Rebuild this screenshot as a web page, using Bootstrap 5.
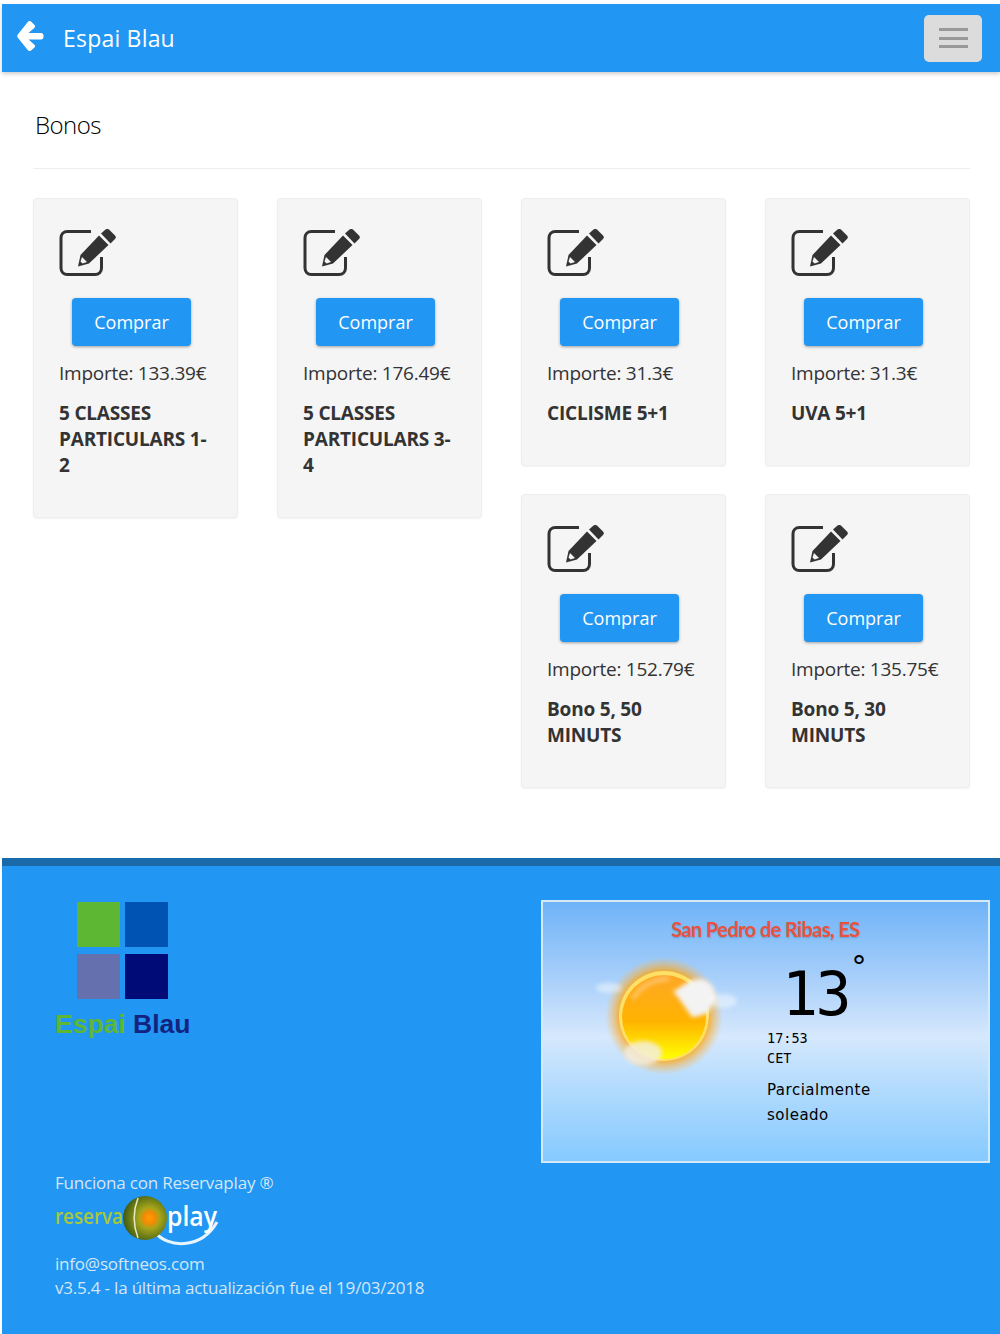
<!DOCTYPE html>
<html lang="es">
<head>
  <meta charset="UTF-8" />
  <meta name="viewport" content="width=device-width, initial-scale=1.0"/>
  <title>Espai Blau - Bonos</title>
  <link href="https://cdn.jsdelivr.net/npm/bootstrap@5.3.3/dist/css/bootstrap.min.css" rel="stylesheet">
  <style>
    html, body { height: 100%; }
    body {
      margin: 0;
      padding: 4px 0 0 2px;
      background: #fff;
      font-family: "Open Sans", sans-serif;
      overflow: hidden;
    }
    .app-bar {
      height: 68px;
      padding: 0 18px 0 15px;
      background: #2196f3;
      box-shadow: 0 2px 4px rgba(0, 0, 0, .2);
    }
    .back-arrow { margin-bottom: 4px; }
    .app-title { margin-left: 19px; font-family: "Open Sans", sans-serif; font-size: 23px; color: #fff; letter-spacing: .2px; }
    .menu-toggle {
      width: 58px;
      height: 47px;
      padding: 0;
      gap: 5.5px;
      background: #dcdcdc;
      border: 0;
      border-radius: 5px;
    }
    .menu-toggle span { width: 29px; height: 3px; background: #999; }
    .page-body { padding: 0 30px 0 31px; height: 786px; }
    .page-title {
      margin: 0;
      padding: 39px 0 29px 2px;
      font-family: "Open Sans", sans-serif;
      font-size: 24px;
      font-weight: 300;
      line-height: 28px;
      letter-spacing: -.5px;
      color: #000;
      border-bottom: 1px solid #eee;
    }
    .bono-grid { margin-top: 29px; display: grid; grid-template-columns: 1fr 1fr; column-gap: 39px; align-items: start; }
    .bono-group { display: grid; grid-template-columns: 205px 205px; column-gap: 39px; row-gap: 28px; align-items: start; }
    .bono-card {
      padding: 30px 25px 39px;
      background: #f5f5f5;
      border: 1px solid #eee;
      border-radius: 4px;
      box-shadow: 0 1px 2px rgba(0, 0, 0, .05);
      font-size: 19px;
      line-height: 26px;
      color: #333;
    }
    .bono-icon { display: block; width: 58px; height: 48px; }
    .btn-buy {
      display: block;
      width: 119px;
      height: 48px;
      margin: 21px 0 14px 13px;
      padding: 0;
      background: #2196f3;
      border: 0;
      border-radius: 4px;
      box-shadow: 0 1px 3px rgba(0, 0, 0, .35);
      color: #fff;
      font-size: 18px;
      font-weight: 400;
    }
    .bono-price { margin: 0 0 14px; letter-spacing: -.25px; white-space: nowrap; }
    .bono-name { margin: 0; font-weight: 700; line-height: 26px; letter-spacing: -.2px; }
    .site-footer {
      height: 476px;
      background: #2196f3;
      border-top: 8px solid #1a69a8;
      color: #d5e6f4;
      padding: 34px 10px 0 53px;
    }
    .brand-block { width: 136px; padding-top: 2px; margin-bottom: 132px; }
    .brand-squares { display: grid; grid-template-columns: 43px 43px; grid-auto-rows: 45px; gap: 7px 5px; margin-left: 22px; }
    .brand-name { font-family: "Liberation Sans", sans-serif; font-size: 26.5px; font-weight: 700; line-height: 30px; margin-top: 10px; white-space: nowrap; }
    .brand-green { color: #5eb732; }
    .brand-navy { color: #13237f; }
    .footer-text { margin: 0; font-family: "Open Sans", sans-serif; font-size: 17px; line-height: 24px; letter-spacing: -.2px; white-space: nowrap; }
    .rp-logo { display: block; margin: 1px 0 4px; }
    .weather-box {
      width: 449px;
      height: 263px;
      padding-top: 14px;
      border: 2px solid #d6e9f9;
      background: linear-gradient(#6fb3f8 0%, #a9d0fa 30%, #d6e8fd 52%, #b5dcfd 70%, #85caff 100%);
      color: #000;
    }
    .weather-city { text-align: center; font-family: "Lato", sans-serif; font-size: 20px; font-weight: 700; line-height: 26px; letter-spacing: -.6px; color: #e8523f; text-shadow: 0 1px 2px rgba(0,0,0,.2); }
    .weather-sun { display: block; margin: 7px 0 0 48px; }
    .weather-info { margin-left: 19px; font-family: "DejaVu Sans", sans-serif; font-size: 15px; line-height: 25px; }
    .weather-temp { position: relative; width: 90px; margin: 18px 0 0 15px; font-family: "DejaVu Sans Mono", monospace; font-size: 60px; line-height: 68px; letter-spacing: -2.500px; }
    .weather-deg { position: absolute; top: -8px; left: 68px; font-size: 30px; line-height: 30px; letter-spacing: 0; }
    .weather-time { font-family: "DejaVu Sans Mono", monospace; font-size: 13.500px; line-height: 20px; }
    .weather-desc { margin-top: 10px; letter-spacing: .5px; }
  </style>
</head>
<body>

<nav class="app-bar d-flex align-items-center">
  <svg class="back-arrow" width="27" height="30" viewBox="0 0 27 30" aria-hidden="true"><path fill="#fff" d="M14 0.5l3.5 3.5c.8.8.8 2 0 2.8L11.5 12H24c1.500 0 2.500 1 2.500 2.500v1.500c0 1.500-1 2.500-2.500 2.500H11.500l6 5.200c.8.8.8 2 0 2.800L14 29.500c-.8.8-2 .8-2.800 0L1 17c-1-1-1-2.700 0-3.700L11.200 .500c.8-.8 2-.8 2.800 0z"/></svg>
  <span class="app-title">Espai Blau</span>
  <button class="menu-toggle d-flex flex-column align-items-center justify-content-center ms-auto" type="button" aria-label="Menu">
    <span></span><span></span><span></span>
  </button>
</nav>

<main class="page-body">
  <h1 class="page-title">Bonos</h1>

  <svg width="0" height="0" class="position-absolute" aria-hidden="true">
    <symbol id="edit-icon" viewBox="0 0 58 48">
      <path fill="none" stroke="#333" stroke-width="3" d="M32 2.500H8.500C4.500 2.500 2 5 2 9v30c0 4 2.500 6.500 6.500 6.500H36c4 0 6.500-2.500 6.500-6.500V28"/>
      <path fill="#333" d="M19 37.500l2.500-11.500L40 6.500 49.500 16 30 34.500z"/>
      <path fill="#333" d="M42 4.500l4.500-4c1-.7 2.500-.7 3.500 0l6 6c1 1 1 2.500 0 3.500l-4.500 4.500z"/>
      <path fill="#f5f5f5" d="M23 28l5 5-4.500 1.500-2-2z"/>
    </symbol>
  </svg>

  <div class="bono-grid">
    <div class="bono-group">
      <div class="bono-card">
        <svg class="bono-icon" aria-hidden="true"><use href="#edit-icon"/></svg>
        <button class="btn btn-buy" type="button">Comprar</button>
        <p class="bono-price">Importe: 133.39€</p>
        <p class="bono-name">5 CLASSES PARTICULARS 1-2</p>
      </div>
      <div class="bono-card">
        <svg class="bono-icon" aria-hidden="true"><use href="#edit-icon"/></svg>
        <button class="btn btn-buy" type="button">Comprar</button>
        <p class="bono-price">Importe: 176.49€</p>
        <p class="bono-name">5 CLASSES PARTICULARS 3-4</p>
      </div>
    </div>
    <div class="bono-group">
      <div class="bono-card">
        <svg class="bono-icon" aria-hidden="true"><use href="#edit-icon"/></svg>
        <button class="btn btn-buy" type="button">Comprar</button>
        <p class="bono-price">Importe: 31.3€</p>
        <p class="bono-name">CICLISME 5+1</p>
      </div>
      <div class="bono-card">
        <svg class="bono-icon" aria-hidden="true"><use href="#edit-icon"/></svg>
        <button class="btn btn-buy" type="button">Comprar</button>
        <p class="bono-price">Importe: 31.3€</p>
        <p class="bono-name">UVA 5+1</p>
      </div>
      <div class="bono-card">
        <svg class="bono-icon" aria-hidden="true"><use href="#edit-icon"/></svg>
        <button class="btn btn-buy" type="button">Comprar</button>
        <p class="bono-price">Importe: 152.79€</p>
        <p class="bono-name">Bono 5, 50 MINUTS</p>
      </div>
      <div class="bono-card">
        <svg class="bono-icon" aria-hidden="true"><use href="#edit-icon"/></svg>
        <button class="btn btn-buy" type="button">Comprar</button>
        <p class="bono-price">Importe: 135.75€</p>
        <p class="bono-name">Bono 5, 30 MINUTS</p>
      </div>
    </div>
  </div>
</main>

<footer class="site-footer d-flex justify-content-between">
  <div>
    <div class="brand-block">
      <div class="brand-squares">
        <div style="background:#5eb732"></div>
        <div style="background:#0053b3"></div>
        <div style="background:#6570af"></div>
        <div style="background:#000b78"></div>
      </div>
      <div class="brand-name"><span class="brand-green">Espai</span> <span class="brand-navy">Blau</span></div>
    </div>
    <p class="footer-text">Funciona con Reservaplay ®</p>
    <svg class="rp-logo" width="165" height="52" viewBox="0 0 165 52" role="img" aria-label="reservaplay">
      <defs>
        <radialGradient id="rp-globe" cx=".6" cy=".5" r=".6">
          <stop offset="0" stop-color="#ff9c00"/>
          <stop offset=".22" stop-color="#f28a05"/>
          <stop offset=".4" stop-color="#a5a51a"/>
          <stop offset="1" stop-color="#3d5a12"/>
        </radialGradient>
      </defs>
      <path fill="none" stroke="#fff" stroke-width="3" opacity=".9" d="M100 36C112 52 146 54 162 26"/>
      <text x="0" y="28" font-family="Open Sans, sans-serif" font-size="22" font-weight="600" textLength="68" lengthAdjust="spacingAndGlyphs" fill="#a8c838">reserva</text>
      <circle cx="90" cy="22" r="22" fill="url(#rp-globe)"/>
      <path fill="none" stroke="#e8e8c8" stroke-width="1.500" d="M83 2c-5 13-5 27 0 40"/>
      <text x="112" y="30" font-family="Open Sans, sans-serif" font-size="27" font-weight="600" textLength="50" lengthAdjust="spacingAndGlyphs" fill="#fff">play</text>
    </svg>
    <p class="footer-text">info@softneos.com</p>
    <p class="footer-text">v3.5.4 - la última actualización fue el 19/03/2018</p>
  </div>

  <div class="weather-box">
    <div class="weather-city">San Pedro de Ribas, ES</div>
    <div class="d-flex">
      <svg class="weather-sun" width="157" height="140" viewBox="0 0 157 140" role="img" aria-label="Parcialmente soleado">
        <defs>
          <linearGradient id="sun-core" x1="0" y1="0" x2="0" y2="1">
            <stop offset="0" stop-color="#ffa726"/>
            <stop offset=".55" stop-color="#ffb300"/>
            <stop offset="1" stop-color="#ffff00"/>
          </linearGradient>
          <radialGradient id="sun-halo">
            <stop offset=".72" stop-color="#ffa000" stop-opacity=".9"/>
            <stop offset="1" stop-color="#ffb74d" stop-opacity="0"/>
          </radialGradient>
          <filter id="soft-cloud" x="-30%" y="-30%" width="160%" height="160%"><feGaussianBlur stdDeviation="2"/></filter>
        </defs>
        <circle cx="73" cy="67" r="59" fill="url(#sun-halo)"/>
        <circle cx="73" cy="67" r="45" fill="#ffe066"/>
        <circle cx="73" cy="68" r="42" fill="url(#sun-core)"/>
        <path fill="none" stroke="#fff" stroke-width="4" opacity=".35" filter="url(#soft-cloud)" d="M42 50c8-14 22-20 36-20"/>
        <path fill="#f3f3f3" filter="url(#soft-cloud)" d="M82 42c8-2 14-12 26-12 10 0 16 8 17 18l-8 16c-6 2-12 4-16 4-6-8-12-18-19-26z"/>
        <g fill="#fff" opacity=".45" filter="url(#soft-cloud)">
          <ellipse cx="18" cy="39" rx="13" ry="5"/>
          <ellipse cx="132" cy="52" rx="14" ry="7"/>
        </g>
        <ellipse cx="52" cy="104" rx="19" ry="12" fill="#f4eee0" opacity=".85" filter="url(#soft-cloud)"/>
      </svg>
      <div class="weather-info">
        <div class="weather-temp">13<span class="weather-deg">°</span></div>
        <div class="weather-time">17:53<br>CET</div>
        <div class="weather-desc">Parcialmente<br>soleado</div>
      </div>
    </div>
  </div>
</footer>

<script src="https://cdn.jsdelivr.net/npm/bootstrap@5.3.3/dist/js/bootstrap.bundle.min.js"></script>
</body>
</html>
